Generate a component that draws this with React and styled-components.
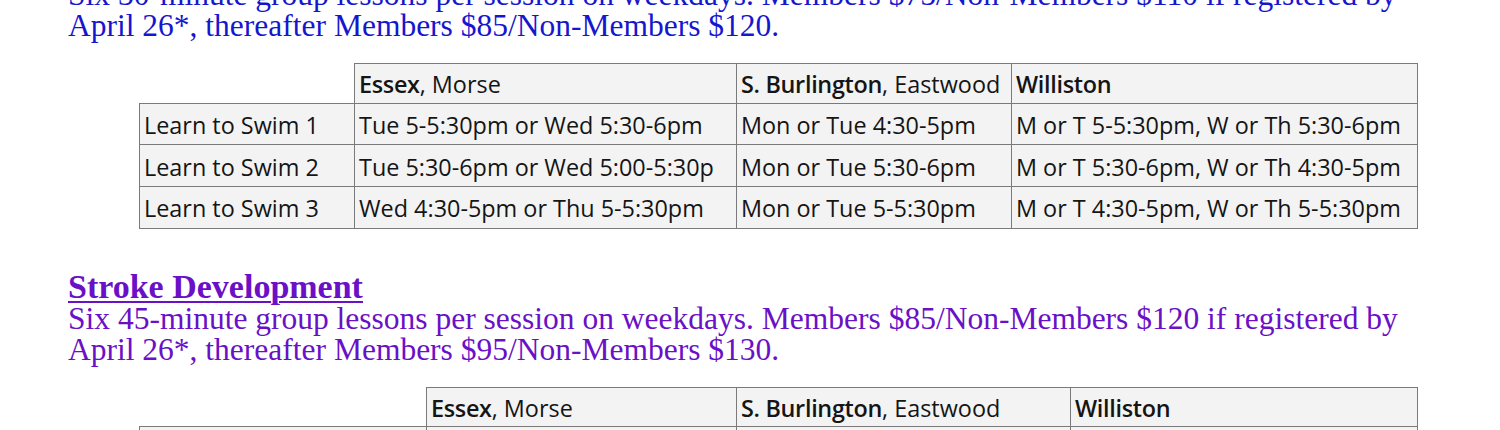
import React from 'react';
import styled, { createGlobalStyle } from 'styled-components';

const GlobalStyle = createGlobalStyle`
  html, body {
    margin: 0;
    padding: 0;
    background: #ffffff;
  }
  body {
    width: 1500px;
    height: 430px;
    overflow: hidden;
  }
`;

const Page = styled.div`
  padding-left: 68px;
  margin-top: -21px;
`;

const Section = styled.section`
  margin-bottom: ${(p) => p.$gap || 0}px;
`;

const Heading = styled.h2`
  margin: 0;
  font-family: "Liberation Serif", serif;
  font-weight: bold;
  font-size: 34px;
  line-height: 33px;
  color: ${(p) => p.$color};
  text-decoration: underline;
  text-decoration-thickness: 2px;
  text-underline-offset: 3px;
`;

const Blurb = styled.p`
  margin: 0;
  font-family: "Liberation Serif", serif;
  font-size: 31.5px;
  line-height: 31px;
  white-space: nowrap;
  color: ${(p) => p.$color};
`;

const Grid = styled.table`
  margin-top: 22px;
  margin-left: 71px;
  width: 1278px;
  border-collapse: collapse;
  table-layout: fixed;
  font-family: "Open Sans", "Liberation Sans", sans-serif;
  font-size: 23.4px;
  line-height: 30px;
  color: #151515;
`;

const Cell = styled.td`
  border: 1px solid #7a7a7a;
  background: #f3f3f3;
  height: ${(p) => (p.$head ? 36.5 : 38.8)}px;
  padding: 2px 4px 0;
  vertical-align: middle;
  white-space: nowrap;
  overflow: hidden;
  &:empty {
    border-top: none;
    border-left: none;
    background: #ffffff;
  }
`;

const Town = styled.b`
  font-weight: 600;
  letter-spacing: -0.3px;
`;

const learnToSwim = {
  cols: [215, 382, 275, 406],
  rows: [
    ['Learn to Swim 1', 'Tue 5-5:30pm or Wed 5:30-6pm', 'Mon or Tue 4:30-5pm', 'M or T 5-5:30pm, W or Th 5:30-6pm'],
    ['Learn to Swim 2', 'Tue 5:30-6pm or Wed 5:00-5:30p', 'Mon or Tue 5:30-6pm', 'M or T 5:30-6pm, W or Th 4:30-5pm'],
    ['Learn to Swim 3', 'Wed 4:30-5pm or Thu 5-5:30pm', 'Mon or Tue 5-5:30pm', 'M or T 4:30-5pm, W or Th 5-5:30pm'],
  ],
};

const stroke = {
  cols: [287, 310, 334, 347],
  rows: [['\u00a0', '\u00a0', '\u00a0', '\u00a0']],
};

function Schedule({ cols, rows }) {
  return (
    <Grid>
      <colgroup>
        {cols.map((w, i) => (
          <col key={i} style={{ width: w }} />
        ))}
      </colgroup>
      <tbody>
        <tr>
          <Cell $head></Cell>
          <Cell $head>
            <Town>Essex</Town>, Morse
          </Cell>
          <Cell $head>
            <Town>S. Burlington</Town>, Eastwood
          </Cell>
          <Cell $head>
            <Town>Williston</Town>
          </Cell>
        </tr>
        {rows.map((r, i) => (
          <tr key={i}>
            {r.map((c, j) => (
              <Cell key={j}>{c}</Cell>
            ))}
          </tr>
        ))}
      </tbody>
    </Grid>
  );
}

export default function App() {
  return (
    <>
      <GlobalStyle />
      <Page>
        <Section $gap={41}>
          <Blurb $color="#1616cf">
            Six 30-minute group lessons per session on weekdays. Members $75/Non-Members $110 if registered by
            <br />
            April 26*, thereafter Members $85/Non-Members $120.
          </Blurb>
          <Schedule {...learnToSwim} />
        </Section>
        <Section>
          <Heading $color="#6a10c6">Stroke Development</Heading>
          <Blurb $color="#6a10c6">
            Six 45-minute group lessons per session on weekdays. Members $85/Non-Members $120 if registered by
            <br />
            April 26*, thereafter Members $95/Non-Members $130.
          </Blurb>
          <Schedule {...stroke} />
        </Section>
      </Page>
    </>
  );
}
